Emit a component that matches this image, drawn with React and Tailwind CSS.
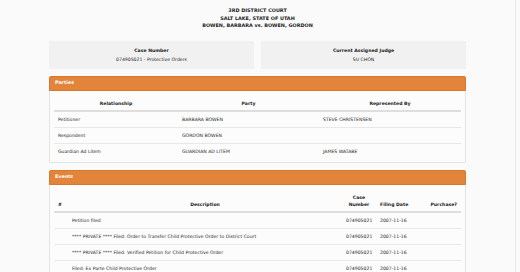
import React from "react";

const parties = [
  { rel: "Petitioner", party: "BARBARA BOWEN", rep: "STEVE CHRISTENSEN" },
  { rel: "Respondent", party: "GORDON BOWEN", rep: "" },
  { rel: "Guardian Ad Litem", party: "GUARDIAN AD LITEM", rep: "JAMES WATABE" },
];

const events = [
  "Petition filed",
  "**** PRIVATE **** Filed: Order to Transfer Child Protective Order to District Court",
  "**** PRIVATE **** Filed: Verified Petition for Child Protective Order",
  "Filed: Ex Parte Child Protective Order",
];

const Card = ({ title, children }) => (
  <div>
    <div className="flex h-[15px] items-center rounded-t-[2px] border border-[#d8782c] bg-[#e2843a] pl-[5px] text-[4.8px] font-bold text-white">
      {title}
    </div>
    <div className="rounded-b-[2px] border-x border-b border-[#e3e3e3] bg-[#fcfcfc] px-[4px] pt-[2px] pb-[3px]">
      {children}
    </div>
  </div>
);

export default function App() {
  return (
    <div className="flex min-h-[272px] w-[520px] bg-[#fafafa] font-['DejaVu_Sans',sans-serif] text-[4.6px] text-[#262626]">
      <div className="w-[515px]">
        <div className="pt-[7px] text-center text-[4.9px] font-bold leading-[7.5px] text-[#1a1a1a]">
          <div>3RD DISTRICT COURT</div>
          <div>SALT LAKE, STATE OF UTAH</div>
          <div>BOWEN, BARBARA vs. BOWEN, GORDON</div>
        </div>

        <div className="mx-auto w-[417px]">
          <div className="mt-[11px] grid grid-cols-2 gap-[7px]">
            <div className="flex h-[28px] flex-col items-center justify-center gap-[2px] bg-[#f1f1f1] leading-[7px]">
              <div className="font-bold text-[#1a1a1a]">Case Number</div>
              <div>074905021 - Protective Orders</div>
            </div>
            <div className="flex h-[28px] flex-col items-center justify-center gap-[2px] bg-[#f1f1f1] leading-[7px]">
              <div className="font-bold text-[#1a1a1a]">Current Assigned Judge</div>
              <div>SU CHON</div>
            </div>
          </div>

          <div className="mt-[7px]">
            <Card title="Parties">
              <table className="w-full table-fixed border-collapse leading-[7px]">
                <colgroup>
                  <col className="w-[124px]" />
                  <col className="w-[141px]" />
                  <col />
                </colgroup>
                <thead>
                  <tr className="border-b-2 border-[#dedede] text-[#1a1a1a]">
                    <th className="pt-[7px] pb-[3px] text-center font-bold">Relationship</th>
                    <th className="pt-[7px] pb-[3px] text-center font-bold">Party</th>
                    <th className="pt-[7px] pb-[3px] text-center font-bold">Represented By</th>
                  </tr>
                </thead>
                <tbody className="divide-y divide-[#e8e8e8]">
                  {parties.map((p) => (
                    <tr key={p.rel}>
                      <td className="px-[4px] py-[4px]">{p.rel}</td>
                      <td className="px-[4px] py-[4px]">{p.party}</td>
                      <td className="px-[4px] py-[4px]">{p.rep}</td>
                    </tr>
                  ))}
                </tbody>
              </table>
            </Card>
          </div>

          <div className="mt-[7px]">
            <Card title="Events">
              <table className="w-full table-fixed border-collapse leading-[7px]">
                <colgroup>
                  <col className="w-[14px]" />
                  <col />
                  <col className="w-[34px]" />
                  <col className="w-[37px]" />
                  <col className="w-[48px]" />
                </colgroup>
                <thead>
                  <tr className="border-b-2 border-[#dedede] text-[#1a1a1a]">
                    <th className="pl-[4px] pt-[7px] pb-[3px] text-left align-bottom font-bold">#</th>
                    <th className="pt-[7px] pb-[3px] text-center align-bottom font-bold">Description</th>
                    <th className="pt-[7px] pb-[3px] text-center align-bottom font-bold">
                      Case
                      <br />
                      Number
                    </th>
                    <th className="pl-[4px] pt-[7px] pb-[3px] text-left align-bottom font-bold whitespace-nowrap">Filing Date</th>
                    <th className="pr-[4px] pt-[7px] pb-[3px] text-right align-bottom font-bold">Purchase?</th>
                  </tr>
                </thead>
                <tbody className="divide-y divide-[#e8e8e8]">
                  {events.map((e) => (
                    <tr key={e}>
                      <td className="py-[4px]"></td>
                      <td className="px-[4px] py-[4px] whitespace-nowrap">{e}</td>
                      <td className="px-[4px] py-[4px]">074905021</td>
                      <td className="px-[4px] py-[4px]">2007-11-16</td>
                      <td className="py-[4px]"></td>
                    </tr>
                  ))}
                </tbody>
              </table>
            </Card>
          </div>
        </div>
      </div>
      <div className="w-[5px] border-l border-[#e6e6e6] bg-[#fafafa]"></div>
    </div>
  );
}
